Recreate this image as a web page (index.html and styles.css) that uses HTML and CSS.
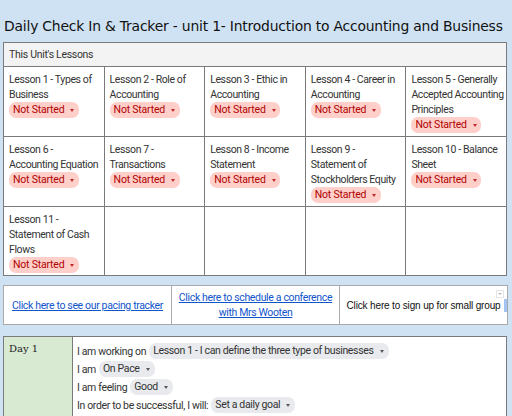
FILE: index.html
```html
<!DOCTYPE html>
<html>
<head>
<meta charset="utf-8">
<link rel="stylesheet" href="styles.css">
</head>
<body>
<div class="page">
  <h1 class="title">Daily Check In &amp; Tracker - unit 1- Introduction to Accounting and Business</h1>

  <table class="lessons">
    <tr><td class="head" colspan="5">This Unit's Lessons</td></tr>
    <tr class="r1">
      <td><div class="lt">Lesson 1 - Types of Business</div><span class="chip red">Not Started<i class="caret"></i></span></td>
      <td><div class="lt">Lesson 2 - Role of Accounting</div><span class="chip red">Not Started<i class="caret"></i></span></td>
      <td><div class="lt">Lesson 3 - Ethic in Accounting</div><span class="chip red">Not Started<i class="caret"></i></span></td>
      <td><div class="lt">Lesson 4 - Career in Accounting</div><span class="chip red">Not Started<i class="caret"></i></span></td>
      <td><div class="lt">Lesson 5 - Generally Accepted Accounting Principles</div><span class="chip red">Not Started<i class="caret"></i></span></td>
    </tr>
    <tr class="r2">
      <td><div class="lt">Lesson 6 -<br>Accounting Equation</div><span class="chip red">Not Started<i class="caret"></i></span></td>
      <td><div class="lt">Lesson 7 -<br>Transactions</div><span class="chip red">Not Started<i class="caret"></i></span></td>
      <td><div class="lt">Lesson 8 - Income Statement</div><span class="chip red">Not Started<i class="caret"></i></span></td>
      <td><div class="lt">Lesson 9 -<br>Statement of<br>Stockholders Equity</div><span class="chip red">Not Started<i class="caret"></i></span></td>
      <td><div class="lt">Lesson 10 - Balance Sheet</div><span class="chip red">Not Started<i class="caret"></i></span></td>
    </tr>
    <tr class="r3">
      <td><div class="lt">Lesson 11 -<br>Statement of Cash<br>Flows</div><span class="chip red">Not Started<i class="caret"></i></span></td>
      <td></td><td></td><td></td><td></td>
    </tr>
  </table>

  <table class="links">
    <tr>
      <td><a href="#">Click here to see our pacing tracker</a></td>
      <td><a href="#">Click here to schedule a conference<br>with Mrs Wooten</a></td>
      <td class="plain">Click here to sign up for small group<span class="dd"><i class="caret"></i></span><span class="bar"></span></td>
    </tr>
  </table>

  <table class="days">
    <tr>
      <td class="day">Day 1</td>
      <td class="entries">
        <div class="line">I am working on <span class="chip gray">Lesson 1 - I can define the three type of businesses<i class="caret"></i></span></div>
        <div class="line">I am <span class="chip gray">On Pace<i class="caret"></i></span></div>
        <div class="line">I am feeling <span class="chip gray">Good<i class="caret"></i></span></div>
        <div class="line">In order to be successful, I will: <span class="chip gray">Set a daily goal<i class="caret"></i></span></div>
      </td>
    </tr>
  </table>
</div>
</body>
</html>
```

FILE: styles.css
```css
html, body {
  margin: 0;
  padding: 0;
  background: #cfe2f3;
}
.page {
  width: 512px;
  height: 416px;
  overflow: hidden;
  padding: 0 0 0 3px;
  box-sizing: border-box;
  font-family: Roboto, "Liberation Sans", sans-serif;
  font-size: 10.5px;
  color: #222;
}
.title {
  margin: 0;
  padding: 18px 0 0 1px;
  height: 24px;
  line-height: 17px;
  font-family: "Comic Sans MS", "DejaVu Sans", sans-serif;
  font-weight: normal;
  font-size: 13.9px;
  letter-spacing: -0.2px;
  color: #111;
  white-space: nowrap;
}
table {
  border-collapse: collapse;
}
.lessons {
  width: 504px;
  table-layout: fixed;
  border: 1px solid #7a7a7a;
  background: #fff;
}
.lessons td {
  border: 1px solid #7a7a7a;
  vertical-align: top;
  padding: 5px 1px 0 5px;
  letter-spacing: -0.4px;
  line-height: 15px;
}
.lessons td.head {
  background: #f3f3f3;
  height: 23px;
  padding: 0 5px;
  vertical-align: middle;
  color: #333;
  letter-spacing: -0.3px;
}
.lessons tr.r1 td { height: 64px; }
.lessons tr.r2 td { height: 64px; }
.lessons tr.r3 td { height: 63px; }
.lt { color: #333; }
.chip {
  display: inline-flex;
  align-items: center;
  height: 16px;
  line-height: 16px;
  border-radius: 7px;
  padding: 0 5px 0 4px;
  white-space: nowrap;
}
.chip.red {
  background: #ffcfc9;
  color: #b10202;
  width: 61px;
  justify-content: space-between;
  letter-spacing: -0.2px;
}
.chip.gray {
  background: #e8eaed;
  color: #333;
  gap: 6px;
}
.caret {
  display: inline-block;
  width: 0;
  height: 0;
  border-left: 2.5px solid transparent;
  border-right: 2.5px solid transparent;
  border-top: 3px solid currentColor;
  margin-left: 6px;
  opacity: 0.8;
}
.chip.gray .caret { margin-left: 0; }

.links {
  margin-top: 9px;
  width: 505px;
  table-layout: fixed;
  border: 1px solid #a9a9a9;
  background: #fff;
}
.links td {
  border: 1px solid #a9a9a9;
  height: 38px;
  padding: 0 2px;
  text-align: center;
  vertical-align: middle;
  line-height: 15px;
  letter-spacing: -0.35px;
  white-space: nowrap;
}
.links a {
  color: #1155cc;
  text-decoration: underline;
}
.links td.plain {
  color: #111;
  position: relative;
  font-family: "Liberation Sans", Arial, sans-serif;
  font-size: 10px;
  letter-spacing: -0.15px;
  padding: 0 2px;
}
.dd {
  position: absolute;
  right: 3px;
  top: 4px;
  width: 6px;
  height: 6px;
  border: 1px solid #e4e4e4;
  display: flex;
  align-items: center;
  justify-content: center;
  color: #aaa;
}
.dd .caret { margin: 0; border-left-width: 2px; border-right-width: 2px; border-top-width: 2px; }
.bar {
  position: absolute;
  right: 0;
  top: 13px;
  width: 3px;
  height: 13px;
  background: #a4c2f4;
}

.days {
  margin-top: 11px;
  width: 504px;
  border: 1px solid #7a7a7a;
  background: #fff;
}
.days td {
  border: 1px solid #7a7a7a;
  vertical-align: top;
}
.days td.day {
  width: 58px;
  background: #d9ead3;
  padding: 6px 5px;
  font-family: "DejaVu Serif", "Liberation Serif", serif;
  font-size: 10px;
  color: #222;
}
.entries {
  padding: 5px 4px 4px 4px;
  letter-spacing: -0.35px;
  color: #333;
}
.line {
  height: 18px;
  display: flex;
  align-items: center;
  gap: 3px;
  white-space: nowrap;
}
```
